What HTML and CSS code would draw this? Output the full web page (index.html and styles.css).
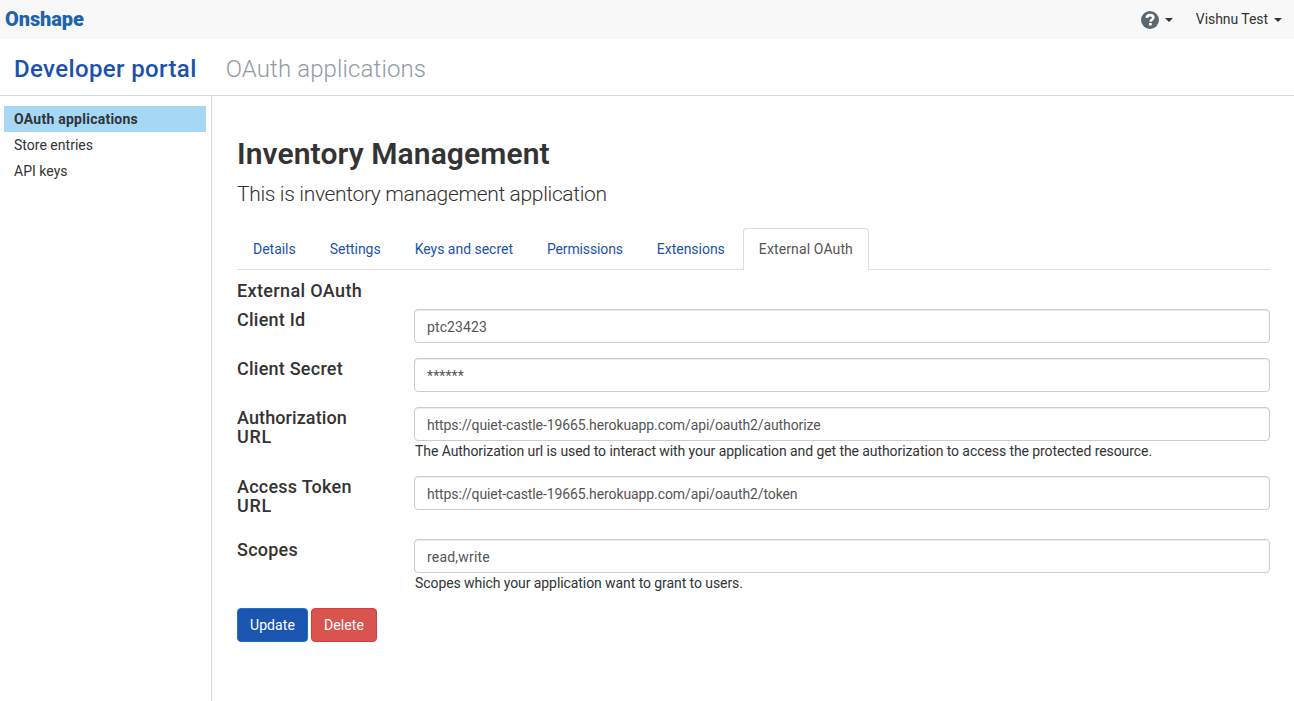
FILE: index.html
```
<!DOCTYPE html>
<html lang="en">
<head>
<meta charset="utf-8">
<title>Onshape Developer portal</title>
<link rel="stylesheet" href="styles.css">
</head>
<body>
<header class="topbar">
  <span class="logo">Onshape</span>
  <div class="topbar-menu">
    <svg class="help-icon" viewBox="0 0 18 18" width="18" height="18"><circle cx="9" cy="9" r="9" fill="#5b6770"/><path d="M5.7 6.9C5.9 5 7.2 4.1 9 4.1c1.9 0 3.3 1 3.3 2.6 0 2-2.6 2-2.8 3.9" fill="none" stroke="#fff" stroke-width="2.6"/><rect x="8" y="11.9" width="2.8" height="2.6" fill="#fff"/></svg>
    <span class="caret"></span>
    <span class="user">Vishnu Test</span>
    <span class="caret"></span>
  </div>
</header>
<div class="subheader">
  <span class="portal">Developer portal</span>
  <span class="section">OAuth applications</span>
</div>
<div class="layout">
  <nav class="sidebar">
    <a class="side-link selected">OAuth applications</a>
    <a class="side-link">Store entries</a>
    <a class="side-link">API keys</a>
  </nav>
  <main class="content">
    <h1 class="title">Inventory Management</h1>
    <p class="lead">This is inventory management application</p>
    <div class="tabs">
      <a class="tab">Details</a>
      <a class="tab">Settings</a>
      <a class="tab">Keys and secret</a>
      <a class="tab tab-permissions">Permissions</a>
      <a class="tab">Extensions</a>
      <a class="tab active">External OAuth</a>
    </div>
    <h4 class="label form-title">External OAuth</h4>
    <form class="form">
      <div class="row"><label class="label">Client Id</label><div class="field"><input class="input" type="text" value="ptc23423"></div></div>
      <div class="row"><label class="label">Client Secret</label><div class="field"><input class="input secret" type="text" value="******"></div></div>
      <div class="row"><label class="label label-authorization">Authorization<br><span class="wide">URL</span></label><div class="field"><input class="input url" type="text" value="https://quiet-castle-19665.herokuapp.com/api/oauth2/authorize"><span class="help">The Authorization url is used to interact with your application and get the authorization to access the protected resource.</span></div></div>
      <div class="row row-token"><label class="label">Access Token<br><span class="wide">URL</span></label><div class="field"><input class="input url" type="text" value="https://quiet-castle-19665.herokuapp.com/api/oauth2/token"></div></div>
      <div class="row"><label class="label">Scopes</label><div class="field"><input class="input scopes" type="text" value="read,write"><span class="help">Scopes which your application want to grant to users.</span></div></div>
    </form>
    <div class="actions">
      <button class="btn update">Update</button>
      <button class="btn delete">Delete</button>
    </div>
  </main>
</div>
</body>
</html>
```

FILE: styles.css
```
* { box-sizing: border-box; }
body { margin: 0; height: 701px; overflow: hidden; display: flex; flex-direction: column; background: #fff; color: #333; font: 14px/20px Roboto, sans-serif; }

.topbar { height: 39px; flex: none; padding: 0 12px 0 5px; display: flex; justify-content: space-between; align-items: center; background: #f8f8f8; }
.logo { padding-bottom: 2px; font-size: 20px; font-weight: 900; letter-spacing: -0.1px; color: #1f63a9; }
.topbar-menu { display: flex; align-items: center; }
.help-icon { margin-right: 6px; }
.caret { border: 4px solid transparent; border-top-color: #333; border-bottom: 0; }
.user { margin: -1px 6px 0 23px; letter-spacing: -0.06px; }

.subheader { height: 57px; flex: none; padding: 4px 14px 0; display: flex; gap: 29px; align-items: center; border-bottom: 1px solid #d0d8e2; font-size: 24px; }
.portal { font-weight: 500; letter-spacing: 0.37px; color: #1b52ae; }
.section { font-weight: 300; letter-spacing: 0.12px; color: #909ba6; }

.layout { flex: 1; display: flex; }
.sidebar { width: 212px; flex: none; padding: 10px 5px 0 4px; border-right: 1px solid #d0d8e2; }
.side-link { display: block; height: 26px; padding: 0 10px; line-height: 26px; letter-spacing: 0.02px; }
.side-link.selected { font-weight: 700; letter-spacing: 0.25px; background: #a6d8f3; }

.content { flex: 1; padding: 40px 24px 0 25px; }
.title { margin: 0; font-size: 30px; line-height: 36px; font-weight: 600; letter-spacing: 0.1px; }
.lead { margin: 8px 0 20px; font-size: 21px; line-height: 28px; font-weight: 300; letter-spacing: -0.34px; }

.tabs { height: 42px; display: flex; gap: 2px; border-bottom: 1px solid #ddd; }
.tab { height: 42px; padding: 0 15px; border: 1px solid transparent; border-bottom: 0; border-radius: 4px 4px 0 0; line-height: 41px; letter-spacing: -0.02px; color: #1b52ae; }
.tab-permissions { letter-spacing: -0.14px; }
.tab.active { letter-spacing: 0.12px; color: #555; border-color: #ddd; background: #fff; }

.label { font-size: 18px; line-height: 19px; font-weight: 500; letter-spacing: 0.24px; }
.label-authorization { letter-spacing: 0.1px; }
.wide { letter-spacing: 0.7px; }
.form-title { margin: 11px 0 9px; letter-spacing: 0.36px; }
.form { display: flex; flex-direction: column; gap: 15px; }
.row { display: grid; grid-template-columns: 177px 1fr; }
.row .label { padding-top: 1px; }
.row-token { height: 48px; }
.field { display: flex; flex-direction: column; }
.input { width: 100%; height: 34px; margin: 0; padding: 2px 12px 0; border: 1px solid #ccc; border-radius: 4px; box-shadow: inset 0 1px 1px rgba(0, 0, 0, .075); background: #fff; color: #555; font: 14px Roboto, sans-serif; letter-spacing: 0.1px; outline: 0; }
.input.url { letter-spacing: -0.1px; }
.input.scopes { letter-spacing: 0.2px; }
.help { height: 20px; letter-spacing: -0.078px; padding-left: 1px; }

.actions { display: flex; gap: 3px; margin-top: 15px; }
.btn { height: 34px; padding: 0; border: 1px solid; border-radius: 4px; color: #fff; font: 14px Roboto, sans-serif; letter-spacing: 0.1px; }
.update { width: 71px; background: #1b55b0; border-color: #2272b9; }
.delete { width: 66px; background: #d9534f; border-color: #d43f3a; }
```
